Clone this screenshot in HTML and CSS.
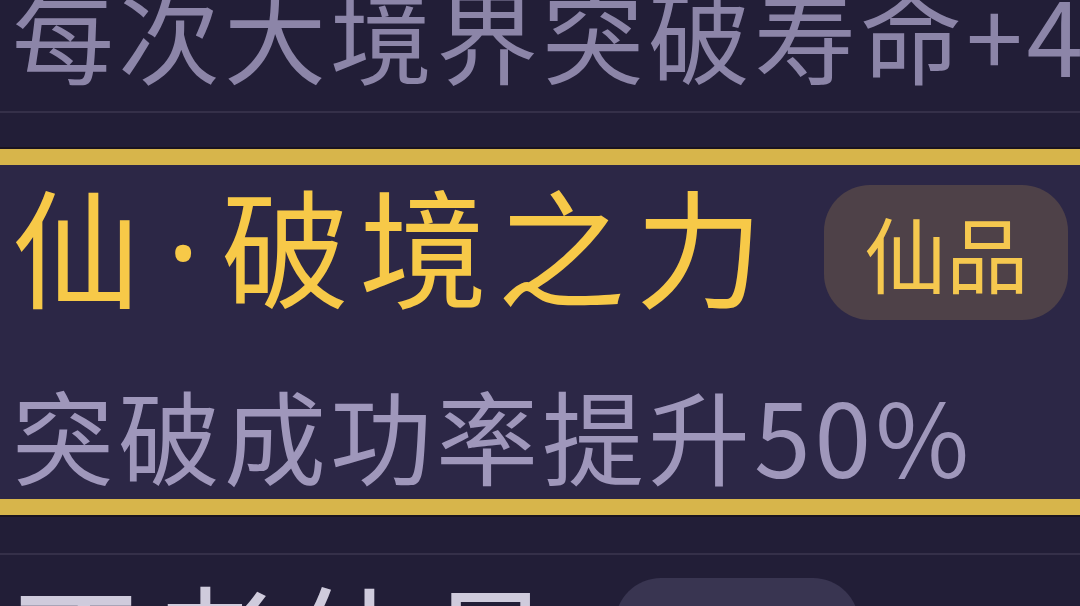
FILE: index.html
```html
<!DOCTYPE html>
<html lang="zh-CN">
<head>
<meta charset="utf-8">
<title>功法列表</title>
<link rel="stylesheet" href="styles.css">
</head>
<body>
<div class="list">
  <div class="card card-plain card-prev">
    <div class="desc desc-dim">每次大境界突破寿命+40年</div>
  </div>
  <div class="card card-selected">
    <div class="head">
      <div class="title title-gold">仙<span class="dot">·</span>破境之力</div>
      <div class="badge badge-gold">仙品</div>
    </div>
    <div class="desc">突破成功率提升50%</div>
  </div>
  <div class="card card-plain card-next">
    <div class="head">
      <div class="title title-white">不老仙丹</div>
      <div class="badge badge-grey">凡品</div>
    </div>
    <div class="desc">寿命上限提升100年</div>
  </div>
</div>
</body>
</html>
```

FILE: styles.css
```css
html, body {
  margin: 0;
  padding: 0;
  background: #221e37;
  overflow: hidden;
  height: 606px;
}

body {
  font-family: "Noto Sans CJK SC", "Noto Sans", sans-serif;
}

.list {
  display: flex;
  flex-direction: column;
  margin: -18px -40px 0 -20px;
}

.card {
  padding-left: 32px;
  padding-right: 40px;
}

.card-plain {
  background: #221e37;
  border-top: 2px solid #353049;
  border-bottom: 2px solid #353049;
}

.card-prev {
  border-top: none;
  padding-bottom: 27px;
}

.card-next {
  margin-top: 38px;
  padding-top: 21px;
}

.card-selected {
  margin-top: 36px;
  background: #2c2746;
  border-top: 16px solid #d7b54b;
  border-bottom: 16px solid #d7b54b;
  box-shadow: 0 -2px 0 #1a1420, 0 2px 0 #1a1420;
  padding-top: 15px;
  padding-bottom: 14px;
}

.head {
  display: flex;
  align-items: center;
  gap: 51px;
}

.title {
  font-size: 128px;
  line-height: 1;
  letter-spacing: 10px;
  padding-bottom: 10px;
  white-space: nowrap;
}

.title-gold {
  color: #f7c948;
}

.title-white {
  color: #cfcbdc;
}

.dot {
  font-family: "Noto Sans", sans-serif;
  padding: 0 11px 0 16px;
}

.badge {
  font-size: 82px;
  line-height: 1;
  padding: 26px 40px 27px;
  border-radius: 46px;
  white-space: nowrap;
}

.badge-gold {
  background: #4e4148;
  color: #f5c84f;
}

.badge-grey {
  background: #393551;
  color: #aaa4c0;
}

.desc {
  font-size: 102px;
  line-height: 1;
  letter-spacing: 4px;
  color: #9f97bb;
  white-space: nowrap;
  margin-top: 59px;
}

.desc-dim {
  color: #8c85a8;
  margin-top: 0;
}
```
